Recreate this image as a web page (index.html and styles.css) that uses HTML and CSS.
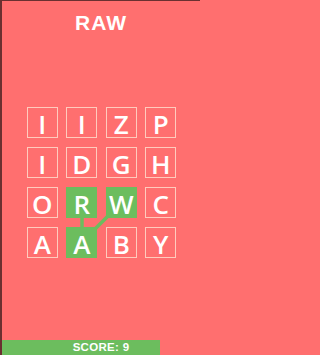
FILE: index.html
```html
<!DOCTYPE html>
<html>
<head>
<meta charset="utf-8">
<link rel="stylesheet" href="styles.css">
</head>
<body>
<div class="screen">
  <h1 class="title">RAW</h1>
  <div class="board">
    <svg class="links" width="150" height="152" viewBox="0 0 150 152">
      <line x1="55" y1="95.5" x2="55" y2="135.5" />
      <line x1="94.5" y1="95.5" x2="55" y2="135" />
    </svg>
    <div class="grid">
      <div class="tile">I</div>
      <div class="tile">I</div>
      <div class="tile">Z</div>
      <div class="tile">P</div>
      <div class="tile">I</div>
      <div class="tile">D</div>
      <div class="tile">G</div>
      <div class="tile">H</div>
      <div class="tile">O</div>
      <div class="tile sel">R</div>
      <div class="tile sel">W</div>
      <div class="tile">C</div>
      <div class="tile">A</div>
      <div class="tile sel">A</div>
      <div class="tile">B</div>
      <div class="tile">Y</div>
    </div>
  </div>
  <div class="footer">
    <div class="progress" style="width:158px"></div>
    <span class="score">SCORE: 9</span>
  </div>
</div>
</body>
</html>
```
FILE: styles.css
```css
html, body {
  margin: 0;
  padding: 0;
}
body {
  width: 200px;
  height: 355px;
  overflow: hidden;
  background: #ff6f6f;
  font-family: "Liberation Sans", Arial, sans-serif;
}
.screen {
  box-sizing: border-box;
  width: 200px;
  height: 355px;
  border-top: 1px solid #6a3030;
  border-left: 2px solid #6a3030;
  background: #ff6f6f;
  display: flex;
  flex-direction: column;
}
.title {
  margin: 0;
  padding-top: 10px;
  font-size: 21px;
  line-height: 24px;
  font-weight: 700;
  letter-spacing: 1px;
  color: #ffffff;
  text-align: center;
}
.board {
  position: relative;
  margin-top: 72px;
  align-self: center;
  margin-left: 1px;
}
.links {
  position: absolute;
  left: 0;
  top: 0;
}
.links line {
  stroke: #6cbd5e;
  stroke-width: 3.5;
}
.grid {
  position: relative;
  display: grid;
  grid-template-columns: repeat(4, 31px);
  grid-auto-rows: 31px;
  column-gap: 8.5px;
  row-gap: 9px;
}
.tile {
  box-sizing: border-box;
  height: 31px;
  border: 1px solid #ffcbbd;
  padding-top: 3px;
  color: #ffffff;
  font-family: "Open Sans", "Liberation Sans", sans-serif;
  font-size: 26px;
  font-weight: 600;
  line-height: 26px;
  text-align: center;
}
.tile.sel {
  background: #6cbd5e;
  border-color: #6cbd5e;
}
.footer {
  margin-top: auto;
  display: grid;
  height: 15px;
}
.progress {
  grid-area: 1 / 1;
  height: 15px;
  background: #6cbd5e;
}
.score {
  grid-area: 1 / 1;
  justify-self: center;
  align-self: center;
  font-size: 11.5px;
  line-height: 15px;
  font-weight: 700;
  letter-spacing: 0.3px;
  color: #ffffff;
}
```
